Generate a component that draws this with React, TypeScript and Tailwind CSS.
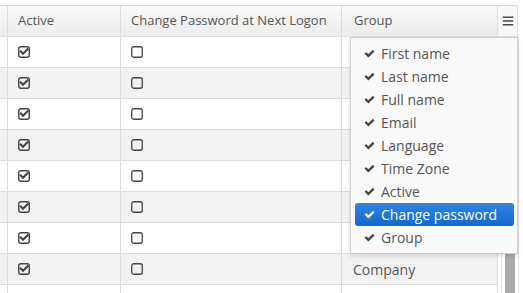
import React from "react";
import { FaBars } from "react-icons/fa";

const menuItems = [
  "First name",
  "Last name",
  "Full name",
  "Email",
  "Language",
  "Time Zone",
  "Active",
  "Change password",
  "Group",
];

function CheckIcon({ className }: { className?: string }) {
  return (
    <svg width="11" height="11" viewBox="0 0 1792 1792" className={className} fill="currentColor">
      <path d="M1671 566q0 40-28 68l-724 724-136 136q-28 28-68 28t-68-28l-136-136-362-362q-28-28-28-68t28-68l136-136q28-28 68-28t68 28l294 295 656-657q28-28 68-28t68 28l136 136q28 28 28 68z" />
    </svg>
  );
}

function CheckedBox() {
  return (
    <svg width="13" height="12" viewBox="0 0 13 12" className="text-[#444]">
      <rect x="0.75" y="0.75" width="10.5" height="10.5" rx="2" fill="none" stroke="currentColor" strokeWidth="1.4" />
      <path d="M2.8 5.6 L5 7.8 L9.6 3.2" fill="none" stroke="currentColor" strokeWidth="2.1" strokeLinecap="square" />
    </svg>
  );
}

function EmptyBox() {
  return (
    <svg width="12" height="12" viewBox="0 0 12 12" className="text-[#444]">
      <rect x="0.75" y="0.75" width="10.5" height="10.5" rx="2" fill="none" stroke="currentColor" strokeWidth="1.3" />
    </svg>
  );
}

function Row({ idx, group }: { idx: number; group?: string }) {
  const bg = idx % 2 === 1 ? "bg-[#f2f2f2]" : "bg-white";
  return (
    <div className={`flex h-[31px] border-b border-[#dcdcdc] ${bg}`}>
      <div className="w-[8px] shrink-0 border-r border-[#dcdcdc]" />
      <div className="w-[113px] shrink-0 border-r border-[#dcdcdc] flex items-center pl-[10px]">
        <CheckedBox />
      </div>
      <div className="w-[221px] shrink-0 border-r border-[#dcdcdc] flex items-center pl-[10px]">
        <EmptyBox />
      </div>
      <div className="w-[156px] shrink-0 border-r border-[#dcdcdc] flex items-center pl-[11px] text-[14px] text-[#555]">
        {group}
      </div>
    </div>
  );
}

export default function App() {
  return (
    <div
      className="relative w-[523px] h-[293px] overflow-hidden bg-white"
      style={{ fontFamily: '"Open Sans", sans-serif' }}
    >
      <div className="pt-[5px]">
        {/* header */}
        <div className="flex h-[32px] w-[518px] border-y border-[#dcdcdc] bg-gradient-to-b from-[#f9f9f9] to-[#ececec] text-[13px] text-[#555]">
          <div className="w-[8px] shrink-0 border-r border-[#dcdcdc]" />
          <div className="w-[113px] shrink-0 border-r border-[#dcdcdc] flex items-center pl-[10px]">Active</div>
          <div className="w-[221px] shrink-0 border-r border-[#dcdcdc] flex items-center pl-[10px]">
            Change Password at Next Logon
          </div>
          <div className="w-[156px] shrink-0 border-r border-[#dcdcdc] flex items-center pl-[12px]">Group</div>
          <div className="w-[20px] shrink-0 border-r border-[#dcdcdc] bg-[#f7f7f7] flex items-center justify-center text-[#444]">
            <FaBars size={12} />
          </div>
        </div>
        {/* body */}
        <div className="flex">
          <div className="flex flex-col">
            {[0, 1, 2, 3, 4, 5, 6, 7, 8].map((i) => (
              <Row key={i} idx={i} group={i === 7 ? "Company" : undefined} />
            ))}
          </div>
          <div className="flex h-[260px] w-[21px] pl-[3px]">
            <div className="w-px bg-[#e4e4e4]" />
            <div className="ml-[3px] mt-[120px] w-[10px] bg-[#ababab]" />
            <div className="ml-[3px] w-px bg-[#e4e4e4]" />
          </div>
        </div>
      </div>

      {/* dropdown menu */}
      <div className="absolute left-[350px] top-[37px] w-[168px] h-[217px] border border-[#cfcfcf] bg-[#fafafa] shadow-[0_2px_4px_rgba(0,0,0,0.12)] p-[4px] pr-[3px]">
        {menuItems.map((m) => {
          const active = m === "Change password";
          return (
            <div
              key={m}
              className={`flex items-center h-[23px] pl-[9px] pb-[1px] rounded-[3px] text-[14px] ${
                active
                  ? "bg-gradient-to-b from-[#2a86e8] to-[#1668c8] text-white"
                  : "text-[#555]"
              }`}
            >
              <CheckIcon className={active ? "text-white" : "text-[#444]"} />
              <span className="ml-[6px]">{m}</span>
            </div>
          );
        })}
      </div>
    </div>
  );
}
